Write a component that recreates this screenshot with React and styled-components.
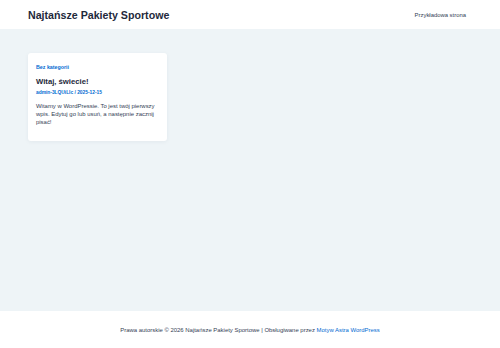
import styled, { createGlobalStyle } from "styled-components";

const GlobalStyle = createGlobalStyle`
  html, body {
    margin: 0;
    padding: 0;
  }
  body {
    font-family: "Liberation Sans", Arial, sans-serif;
    background: #eef4f7;
    color: #334155;
  }
  #root {
    min-height: 348px;
    display: flex;
    flex-direction: column;
  }
`;

const Header = styled.header`
  height: 29px;
  background: #fff;
  display: flex;
  align-items: center;
  justify-content: space-between;
  padding: 0 34px 0 28px;
`;

const SiteTitle = styled.a`
  font-size: 10.65px;
  font-weight: 700;
  color: #1e293b;
  text-decoration: none;
`;

const NavLink = styled.a`
  font-size: 5.9px;
  color: #334155;
  text-decoration: none;
`;

const Main = styled.main`
  flex: 1;
  padding: 24px 28px;
  display: flex;
  align-items: flex-start;
`;

const Card = styled.article`
  width: 139px;
  box-sizing: border-box;
  background: #fff;
  border-radius: 3px;
  box-shadow: 0 1px 4px rgba(30, 50, 80, 0.06);
  padding: 11px 8px 15px;
`;

const Category = styled.a`
  display: block;
  font-size: 5.3px;
  line-height: 6px;
  font-weight: 700;
  color: #046bd2;
  text-decoration: none;
`;

const PostTitle = styled.h2`
  margin: 7px 0 3px;
  font-size: 7.7px;
  line-height: 10px;
  font-weight: 700;
  color: #1e293b;
`;

const Meta = styled.div`
  font-size: 4.85px;
  line-height: 6px;
  font-weight: 700;
  color: #046bd2;
`;

const Excerpt = styled.p`
  margin: 6px 0 0;
  font-size: 5.95px;
  line-height: 8px;
  color: #334155;
`;

const Footer = styled.footer`
  height: 37px;
  background: #fff;
  display: flex;
  align-items: center;
  justify-content: center;
  font-size: 5.94px;
  color: #334155;
`;

const FooterLink = styled.a`
  color: #046bd2;
  text-decoration: none;
`;

export default function App() {
  return (
    <>
      <GlobalStyle />
      <Header>
        <SiteTitle href="#">Najtańsze Pakiety Sportowe</SiteTitle>
        <NavLink href="#">Przykładowa strona</NavLink>
      </Header>
      <Main>
        <Card>
          <Category href="#">Bez kategorii</Category>
          <PostTitle>Witaj, świecie!</PostTitle>
          <Meta>admin-3LQUiLIc / 2025-12-15</Meta>
          <Excerpt>
            Witamy w WordPressie. To jest twój pierwszy wpis. Edytuj go lub
            usuń, a następnie zacznij pisać!
          </Excerpt>
        </Card>
      </Main>
      <Footer>
        <span>
          Prawa autorskie © 2026 Najtańsze Pakiety Sportowe | Obsługiwane przez{" "}
          <FooterLink href="#">Motyw Astra WordPress</FooterLink>
        </span>
      </Footer>
    </>
  );
}
